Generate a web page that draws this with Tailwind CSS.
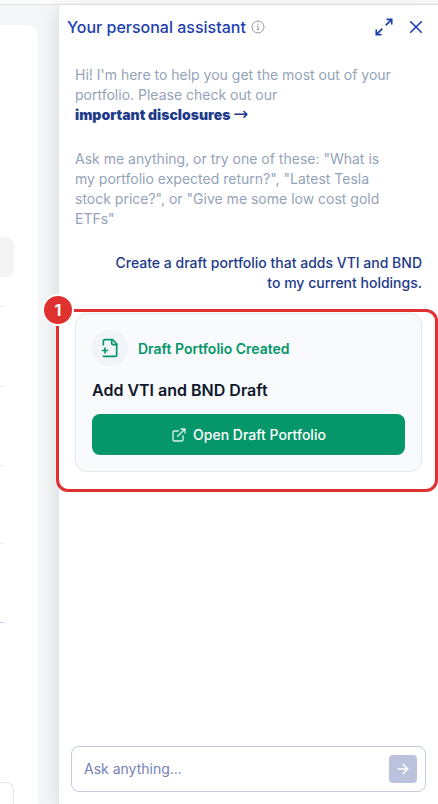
<!DOCTYPE html>
<html lang="en">
<head>
<meta charset="utf-8">
<meta name="viewport" content="width=device-width, initial-scale=1">
<title>Your personal assistant</title>
<script src="https://cdn.jsdelivr.net/npm/@tailwindcss/browser@4"></script>
</head>
<body class="flex h-screen flex-col overflow-hidden bg-[#f4f6f8] font-['Inter','Liberation_Sans',sans-serif] text-sm">
  <div class="h-[5px] shrink-0 border-b border-[#e2e4ea] bg-[#fcfcfb]"></div>
  <div class="flex min-h-0 flex-1">
    <!-- Page behind the assistant panel -->
    <div class="w-[58px] shrink-0 pt-5 pr-5" aria-hidden="true">
      <div class="flex h-full flex-col overflow-hidden rounded-tr-xl bg-white pt-[212px]">
        <div class="h-10 w-3.5 shrink-0 rounded-r-lg bg-[#f4f4f4]"></div>
        <div class="h-[30px] w-1 shrink-0 border-b border-[#e8eaef]"></div>
        <div class="h-20 w-1 shrink-0 border-b border-[#e8eaef]"></div>
        <div class="h-[79px] w-1 shrink-0 border-b border-[#e8eaef]"></div>
        <div class="h-[78px] w-1 shrink-0 border-b border-[#e8eaef]"></div>
        <div class="h-[79px] w-1 shrink-0 border-b border-[#c5cde6]"></div>
        <div class="mt-[159px] w-3.5 flex-1 rounded-tr-lg border-t border-r border-[#e5e5e5]"></div>
      </div>
    </div>

    <aside class="relative flex min-w-0 flex-1 flex-col border-l border-[#e2e5ee] bg-white shadow-[0_4px_20px_rgba(0,0,0,0.12)]">
      <header class="flex h-11 shrink-0 items-center pr-3 pl-2 text-[#1e40af]">
        <h1 class="text-base font-medium">Your personal assistant</h1>
        <button type="button" aria-label="About the assistant" class="ml-[5px] text-[#999]">
          <svg class="size-3.5" viewBox="0 0 14 14" fill="none" stroke="currentColor"><circle cx="7" cy="7" r="6"/><path d="M6 6.300H7V9.600M5.700 9.600H8.300"/><circle cx="7" cy="4.300" r=".7" fill="currentColor" stroke="none"/></svg>
        </button>
        <button type="button" aria-label="Expand" class="ml-auto">
          <svg class="size-5" viewBox="0 0 20 20" fill="none" stroke="currentColor" stroke-width="1.700"><path d="M12.500 2.400h5.200v5.200M17.700 2.400L11.700 8.400M7.500 17.600H2.300v-5.200M2.300 17.600L8.300 11.600"/></svg>
        </button>
        <button type="button" aria-label="Close" class="ml-3">
          <svg class="size-5" viewBox="0 0 20 20" fill="none" stroke="currentColor" stroke-width="1.600" stroke-linecap="round"><path d="M4.700 4.700l10.600 10.600M15.300 4.700L4.700 15.300"/></svg>
        </button>
      </header>

      <main class="flex min-h-0 flex-1 flex-col px-4 pt-4">
        <p class="text-[#94a3b8]">Hi! I'm here to help you get the most out of your<br>portfolio. Please check out our<br><a href="#disclosures" class="font-black text-[#1e3a8a]">important disclosures <span class="font-['DejaVu_Sans',sans-serif] text-lg leading-none font-normal">→</span></a></p>
        <p class="mt-6 text-[#94a3b8]">Ask me anything, or try one of these: "What is<br>my portfolio expected return?", "Latest Tesla<br>stock price?", or "Give me some low cost gold<br>ETFs"</p>
        <p class="mt-6 text-right font-medium text-[#1e3a8a]">Create a draft portfolio that adds VTI and BND<br>to my current holdings.</p>

        <div class="relative mt-5">
          <section class="rounded-xl border border-[#e2e8f0] bg-[#f8fafc] p-4">
            <div class="flex items-center gap-2.5">
              <span class="flex size-9 items-center justify-center rounded-full bg-[#f1f5f9] text-[#059669]">
                <svg class="size-5" viewBox="0 0 24 24" fill="none" stroke="currentColor" stroke-width="2" stroke-linecap="round" stroke-linejoin="round"><path d="M4 22h14a2 2 0 0 0 2-2V7l-5-5H6a2 2 0 0 0-2 2v4"/><path d="M14 2v4a2 2 0 0 0 2 2h4M3 15h6M6 12v6"/></svg>
              </span>
              <span class="pt-0.5 font-semibold text-[#059669]">Draft Portfolio Created</span>
            </div>
            <h2 class="mt-3 text-base font-semibold text-[#0f172a]">Add VTI and BND Draft</h2>
            <button type="button" class="mt-3 flex h-[41px] w-full items-center justify-center gap-1.5 rounded-lg bg-[#059669] font-medium text-white">
              <svg class="size-4 text-white/85" viewBox="0 0 24 24" fill="none" stroke="currentColor" stroke-width="2" stroke-linecap="round" stroke-linejoin="round"><path d="M15 3h6v6M10 14L21 3M18 13v6a2 2 0 0 1-2 2H5a2 2 0 0 1-2-2V8a2 2 0 0 1 2-2h6"/></svg>
              Open Draft Portfolio
            </button>
          </section>
          <!-- Numbered callout around the card -->
          <div class="pointer-events-none absolute -top-1 -right-4 -bottom-5 -left-[19px] rounded-xl border-3 border-[#e03131]"></div>
          <span class="absolute -top-[19px] -left-[33px] flex size-8 items-center justify-center rounded-full border-2 border-white bg-[#e03131] text-base font-bold text-white">1</span>
        </div>
      </main>

      <form class="mx-3 mb-3 flex h-[46px] shrink-0 items-center rounded-lg border border-[#c0cbdc] pr-2 pl-3">
        <input type="text" aria-label="Message" placeholder="Ask anything..." class="min-w-0 flex-1 bg-transparent text-[#1e3a8a] outline-none placeholder:text-[#7482b8]">
        <button type="submit" aria-label="Send" class="flex size-7 items-center justify-center rounded-sm bg-[#bac2dd] text-white">
          <svg class="size-4" viewBox="0 0 16 16" fill="none" stroke="currentColor" stroke-width="1.500" stroke-linecap="round" stroke-linejoin="round"><path d="M3.300 8h9.400M8 3.300L12.700 8 8 12.700"/></svg>
        </button>
      </form>
    </aside>
  </div>
</body>
</html>
